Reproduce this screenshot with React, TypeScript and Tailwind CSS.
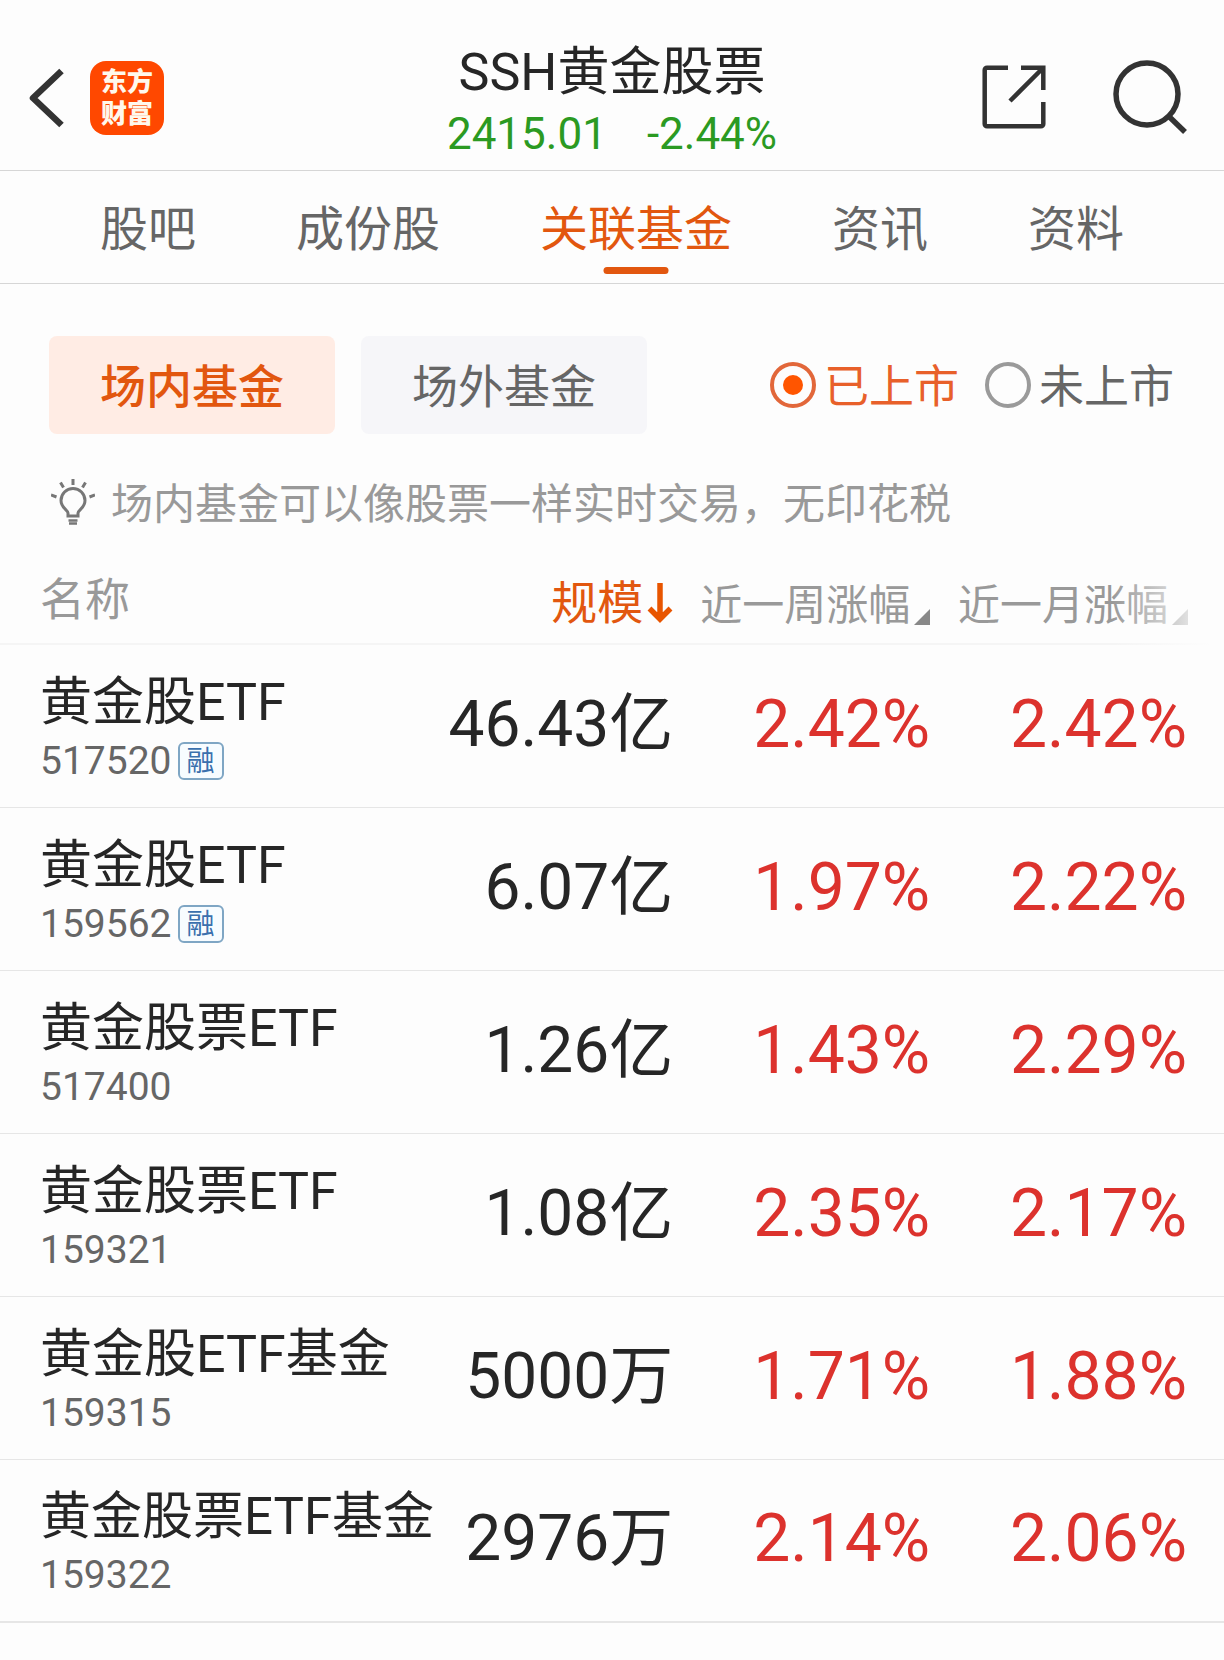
import { useState } from "react";
import clsx from "clsx";

const tabs = ["股吧", "成份股", "关联基金", "资讯", "资料"];
const markets = ["场内基金", "场外基金"];
const listings = ["已上市", "未上市"];

type Fund = {
  name: string;
  code: string;
  margin?: boolean;
  scale: string;
  week: string;
  month: string;
};

const funds: Fund[] = [
  { name: "黄金股ETF", code: "517520", margin: true, scale: "46.43亿", week: "2.42%", month: "2.42%" },
  { name: "黄金股ETF", code: "159562", margin: true, scale: "6.07亿", week: "1.97%", month: "2.22%" },
  { name: "黄金股票ETF", code: "517400", scale: "1.26亿", week: "1.43%", month: "2.29%" },
  { name: "黄金股票ETF", code: "159321", scale: "1.08亿", week: "2.35%", month: "2.17%" },
  { name: "黄金股ETF基金", code: "159315", scale: "5000万", week: "1.71%", month: "1.88%" },
  { name: "黄金股票ETF基金", code: "159322", scale: "2976万", week: "2.14%", month: "2.06%" },
];

function Header() {
  return (
    <header className="grid grid-cols-[1fr_auto_1fr] items-center border-b border-[#d6d6d6] px-7 pt-6">
      <div className="flex items-center gap-6 pt-[2px]">
        <button type="button" aria-label="返回">
          <svg viewBox="0 0 38 62" className="h-[62px] w-[38px]" fill="none" stroke="#333" strokeWidth="6.5">
            <path d="M33.500 4 5 31 33.500 58" strokeLinejoin="round" />
          </svg>
        </button>
        <a
          href="#home"
          className="grid size-[74px] place-content-center rounded-2xl bg-[#ff4800] text-center text-[26px] leading-8 font-black text-[#fff8ec]"
        >
          东方
          <br />
          财富
        </a>
      </div>

      <div className="pt-[18px] pb-[6px] text-center">
        <h1 className="text-[52px] leading-[62px] text-[#262626]">SSH黄金股票</h1>
        <p className="flex justify-center gap-10 text-[44px] leading-[60px] text-[#2b9a22]">
          <span>2415.01</span>
          <span>-2.44%</span>
        </p>
      </div>

      <div className="flex items-center justify-end gap-[66px] pr-2">
        <button type="button" aria-label="分享">
          <svg viewBox="0 0 64 64" className="size-16" fill="none" stroke="#333" strokeWidth="4.5">
            <path d="M26 2.7H5a2.3 2.3 0 0 0-2.3 2.3v54A2.3 2.3 0 0 0 5 61.3h54a2.3 2.3 0 0 0 2.3-2.3V37" />
            <path d="M39 2.7h22.3V25M61 3 28 36" />
          </svg>
        </button>
        <button type="button" aria-label="搜索">
          <svg viewBox="0 0 76 76" className="size-[76px]" fill="none" stroke="#333" strokeWidth="5.5">
            <circle cx="35" cy="35" r="31" />
            <path d="M57 57.500 73 73" />
          </svg>
        </button>
      </div>
    </header>
  );
}

function Tabs() {
  const [active, setActive] = useState("关联基金");
  return (
    <nav className="flex h-[113px] items-stretch justify-evenly border-b border-[#d6d6d6]">
      {tabs.map((tab) => (
        <button
          key={tab}
          type="button"
          onClick={() => setActive(tab)}
          className={clsx(
            "relative pt-[6px] text-[48px] leading-none",
            tab === active ? "text-[#e2570f]" : "text-[#666]"
          )}
        >
          {tab}
          {tab === active && (
            <span className="absolute bottom-[9px] left-1/2 h-[7px] w-[65px] -translate-x-1/2 rounded-full bg-[#e2570f]" />
          )}
        </button>
      ))}
    </nav>
  );
}

function Filters() {
  const [market, setMarket] = useState("场内基金");
  const [listing, setListing] = useState("已上市");
  return (
    <div className="flex items-center justify-between pt-[52px] pr-[50px] pl-[49px] leading-none">
      <div className="flex gap-[26px]">
        {markets.map((m) => (
          <button
            key={m}
            type="button"
            onClick={() => setMarket(m)}
            className={clsx(
              "h-[98px] w-[286px] rounded-lg pt-1 text-[46px]",
              m === market ? "bg-[#ffece4] font-medium text-[#e2570f]" : "bg-[#f6f6f9] text-[#666]"
            )}
          >
            {m}
          </button>
        ))}
      </div>
      <div className="flex gap-[26px] text-[45px]">
        {listings.map((l) => (
          <label
            key={l}
            className={clsx("flex items-center gap-2", l === listing ? "text-[#e8602a]" : "text-[#666]")}
          >
            <input
              type="radio"
              name="listing"
              checked={l === listing}
              onChange={() => setListing(l)}
              className="grid size-[46px] appearance-none place-content-center rounded-full border-4 border-[#9a9a9a] before:size-5 before:rounded-full checked:border-[#e2673a] checked:before:bg-[#ff5500]"
            />
            <span className="pt-1">{l}</span>
          </label>
        ))}
      </div>
    </div>
  );
}

function Tip() {
  return (
    <p className="mt-[35px] flex items-center gap-4 pl-[51px] text-[42px] leading-[60px] text-[#999]">
      <svg viewBox="0 0 44 46" className="h-[46px] w-11" fill="none" stroke="#777" strokeWidth="3">
        <path d="M17 37v-3c0-3-7-5-7-12.500a12 12 0 0 1 24 0C34 29 27 31 27 34v3Z" />
        <path d="M17.500 41.500h9M18 44.500h8" strokeWidth="2.500" />
        <path d="M22 0v6M9.500 3.500l3 5M34.500 3.500l-3 5M0 16l5.500 2M44 16l-5.500 2" />
      </svg>
      <span className="pt-[6px]">场内基金可以像股票一样实时交易，无印花税</span>
    </p>
  );
}

function SortCorner() {
  return (
    <svg viewBox="0 0 16 16" className="mb-[2px] size-4" fill="#888">
      <path d="M16 0v16H0Z" />
    </svg>
  );
}

function FundTable() {
  return (
    <div className="relative mt-[21px]">
      <table className="w-full table-fixed border-collapse whitespace-nowrap">
        <colgroup>
          <col className="w-[36%]" />
          <col className="w-[19%]" />
          <col className="w-[21%]" />
          <col className="w-[24%]" />
        </colgroup>
        <thead>
          <tr className="h-[88px] border-b-2 border-[#f5f5f5] leading-none text-[#999]">
            <th className="pt-[2px] pl-10 text-left text-[45px] font-normal">名称</th>
            <th className="text-[46px] font-normal text-[#e2570f]">
              <button type="button" className="ml-auto flex items-center gap-1 pt-[6px]">
                规模
                <svg viewBox="0 0 26 40" className="h-10 w-[26px]" fill="none" stroke="#e85500" strokeWidth="5.500">
                  <path d="M13 0v36M2.500 25.500 13 36l10.500-10.500" />
                </svg>
              </button>
            </th>
            <th className="text-[42px] font-normal">
              <button type="button" className="ml-auto flex items-end gap-1 pt-3">
                近一周涨幅
                <SortCorner />
              </button>
            </th>
            <th className="pr-9 text-[42px] font-normal">
              <button type="button" className="ml-auto flex items-end gap-1 pt-3">
                近一月涨幅
                <SortCorner />
              </button>
            </th>
          </tr>
        </thead>
        <tbody>
          {funds.map((fund) => (
            <tr key={fund.code} className="h-[163px] border-b border-[#e6e6e6] last:border-b-2">
              <td className="pt-[6px] pl-10">
                <div
                  className={clsx(
                    "pt-1 leading-[60px] text-[#262626]",
                    fund.name.length > 8 ? "text-[51px]" : "text-[52px]"
                  )}
                >
                  {fund.name}
                </div>
                <div className="flex items-center gap-[6px] text-[39px] leading-[56px] text-[#666]">
                  {fund.code}
                  {fund.margin && (
                    <span className="grid h-[38px] w-[46px] place-content-center rounded-md border-2 border-[#7fa6c4] bg-[#f7fcff] pt-[2px] text-[28px] leading-none text-[#3a70ad]">
                      融
                    </span>
                  )}
                </div>
              </td>
              <td className="pb-[2px] text-right text-[64px] leading-none text-[#262626]">{fund.scale}</td>
              <td className="pb-[2px] text-right text-[66px] leading-none text-[#dc322d]">{fund.week}</td>
              <td className="pr-[37px] pb-[2px] text-right text-[66px] leading-none text-[#dc322d]">{fund.month}</td>
            </tr>
          ))}
        </tbody>
      </table>
      <div className="pointer-events-none absolute top-0 right-0 h-[90px] w-28 bg-linear-to-r from-transparent to-[#fdfdfd] to-90%" />
    </div>
  );
}

export default function App() {
  return (
    <main className="min-h-screen bg-[#fdfdfd] font-[Roboto,'Noto_Sans_CJK_SC',sans-serif]">
      <Header />
      <Tabs />
      <Filters />
      <Tip />
      <FundTable />
    </main>
  );
}
